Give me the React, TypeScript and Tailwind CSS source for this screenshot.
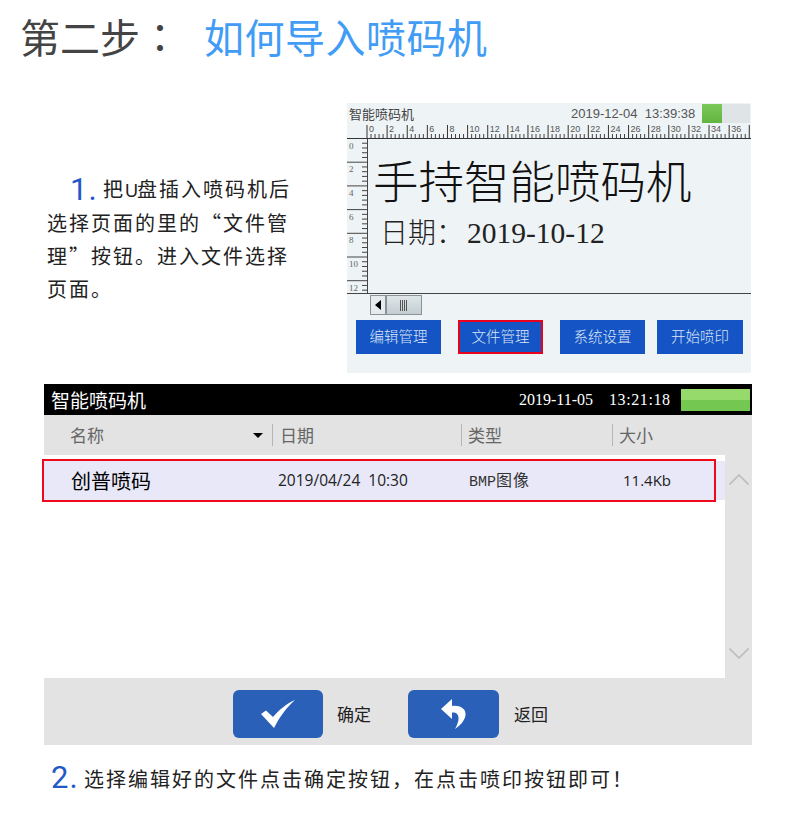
const cjk = "font-['Noto_Sans_CJK_SC','Liberation_Sans',sans-serif]";
const colon = "font-['Noto_Sans_CJK_TC',sans-serif]";
const num = "font-['Roboto',sans-serif] text-[31px] leading-none text-[#2458c8]";

const screenButtons = [
  { label: "编辑管理", cls: "w-[85px] ml-[9px]" },
  { label: "文件管理", cls: "w-[85px] ml-[17px] border-[2px] border-[#e8001c]" },
  { label: "系统设置", cls: "w-[85px] ml-[17px]" },
  { label: "开始喷印", cls: "w-[86px] ml-[12px]" },
];

function TopRuler() {
  const marks = Array.from({ length: 20 }, (_, i) => i);
  return (
    <svg width="404" height="15" className="block shrink-0">
      {marks.map((m) => {
        const x = 20 + m * 20.12;
        return (
          <g key={m}>
            <line x1={x} y1="1" x2={x} y2="14" stroke="#333" strokeWidth="1" />
            {[1, 2, 3, 4].map((k) => (
              <line key={k} x1={x + k * 4.02} y1="10" x2={x + k * 4.02} y2="14" stroke="#444" strokeWidth="1" />
            ))}
            {m < 19 && (
              <text x={x + 2} y="8" fontSize="9" fill="#555" fontFamily="Liberation Sans">
                {m * 2}
              </text>
            )}
          </g>
        );
      })}
      <line x1="0" y1="14.5" x2="404" y2="14.5" stroke="#333" strokeWidth="1.2" />
    </svg>
  );
}

function LeftRuler() {
  const marks = [0, 2, 4, 6, 8, 10, 12];
  return (
    <svg width="20" height="155" className="block shrink-0">
      {marks.map((m, i) => {
        const y = i * 23.7 - 0.5;
        return (
          <g key={m}>
            <line x1="0" y1={y} x2="20" y2={y} stroke="#444" strokeWidth="1" />
            {[1, 2, 3, 4].map((k) => (
              <line key={k} x1="15" y1={y + k * 4.74} x2="20" y2={y + k * 4.74} stroke="#444" strokeWidth="1" />
            ))}
            <text x="2" y={y + 10} fontSize="9" fill="#666" fontFamily="Liberation Serif">
              {m}
            </text>
          </g>
        );
      })}
    </svg>
  );
}

function PrinterScreen() {
  return (
    <div className={`w-[404px] h-[270px] bg-[#eef3f6] flex flex-col ${cjk}`}>
      <div className="h-[21px] flex items-center shrink-0">
        <span className="ml-[2px] w-[222px] text-[13px] leading-none text-[#444]">智能喷码机</span>
        <span className="font-['Liberation_Sans'] text-[13px] leading-none text-[#555] whitespace-pre">2019-12-04  13:39:38</span>
        <div className="ml-[7px] h-[19px] w-[48px] bg-[#dfe4e6] flex">
          <div className="w-[20px] h-full bg-gradient-to-b from-[#7cc85a] to-[#62b53f]" />
        </div>
      </div>
      <TopRuler />
      <div className="h-[155px] flex border-b border-[#444] shrink-0">
        <LeftRuler />
        <div className="flex-1 border-l border-[#444] pl-[5px]">
          <div className="mt-[10px] text-[45.500px] leading-[60px] text-[#111] font-light whitespace-nowrap">手持智能喷码机</div>
          <div className="mt-[2px] ml-[7px] text-[28px] leading-[40px] text-[#222] font-light whitespace-nowrap">
            日期：<span className="ml-[3px] font-['Liberation_Serif'] text-[29.500px]">2019-10-12</span>
          </div>
        </div>
      </div>
      <div className="mt-[1px] ml-[23px] h-[20px] flex shrink-0">
        <div className="w-[16px] border border-[#8a9296] bg-[#e6ebee] flex items-center justify-center">
          <div className="w-0 h-0 border-y-[5px] border-y-transparent border-r-[6px] border-r-black" />
        </div>
        <div className="w-[36px] border border-[#8a9296] bg-gradient-to-b from-[#dfe6e8] to-[#c3ced2] flex items-center justify-center">
          <div className="w-[8px] h-[11px] bg-[repeating-linear-gradient(90deg,#555_0,#555_1px,transparent_1px,transparent_2px)]" />
        </div>
      </div>
      <div className="mt-[5px] flex">
        {screenButtons.map((b) => (
          <div key={b.label} className={`${b.cls} h-[34px] pb-[2px] bg-[#1554c4] flex items-center justify-center text-[14.500px] text-[#dce6f5] font-light`}>
            {b.label}
          </div>
        ))}
      </div>
    </div>
  );
}

function FileBrowser() {
  return (
    <div className={`ml-[44px] w-[708px] flex flex-col ${cjk}`}>
      <div className="h-[31px] bg-black flex items-center text-white">
        <span className="ml-[7px] w-[468px] text-[19px] leading-none whitespace-nowrap">智能喷码机</span>
        <span className="w-[90px] font-['Liberation_Serif'] text-[16px] leading-none whitespace-pre">2019-11-05</span>
        <span className="w-[72px] font-['Liberation_Serif'] text-[16px] leading-none tracking-[0.600px] whitespace-pre">13:21:18</span>
        <div className="w-[69px] h-[22px] flex flex-col">
          <div className="h-[11px] bg-[#97da6c]" />
          <div className="h-[11px] bg-[#74c851]" />
        </div>
      </div>
      <div className="h-[40px] bg-[#e3e3e3] flex items-center text-[17px] text-[#666]">
        <span className="ml-[26px] w-[183px] whitespace-nowrap">名称</span>
        <div className="w-0 h-0 border-x-[5px] border-x-transparent border-t-[5px] border-t-black" />
        <div className="ml-[9px] h-[22px] border-l border-[#b5b5b5]" />
        <span className="ml-[7px] w-[181px] whitespace-nowrap">日期</span>
        <div className="h-[22px] border-l border-[#b5b5b5]" />
        <span className="ml-[6px] w-[144px] whitespace-nowrap">类型</span>
        <div className="h-[22px] border-l border-[#b5b5b5]" />
        <span className="ml-[6px] whitespace-nowrap">大小</span>
      </div>
      <div className="h-[223px] flex">
        <div className="w-[681px] bg-white pt-[6px] relative">
          <div className="h-[39px] bg-[#e8e8f8] flex items-center text-[#222]">
            <span className="ml-[27px] w-[207px] text-[20px] text-black whitespace-nowrap">创普喷码</span>
            <span className="w-[191px] font-['Open_Sans'] text-[15.500px] whitespace-pre">2019/04/24  10:30</span>
            <span className="w-[154px] text-[16px] tracking-[1px] text-[#333] whitespace-nowrap">
              <span className="font-['Liberation_Mono'] text-[15px] tracking-[0px]">BMP</span>图像
            </span>
            <span className="font-['Open_Sans'] text-[15px]">11.4Kb</span>
          </div>
          <div className="absolute left-[-2px] top-[4px] w-[674px] h-[43px] border-[2px] border-[#ee0a1c]" />
        </div>
        <div className="flex-1 bg-[#e3e3e3] flex flex-col items-center justify-between pt-[19px] pb-[19px]">
          <svg width="20" height="11" viewBox="0 0 20 11"><polyline points="0.5,10.5 10,1 19.5,10.5" fill="none" stroke="#bdbdbd" strokeWidth="1.6" /></svg>
          <svg width="20" height="11" viewBox="0 0 20 11"><polyline points="0.5,0.5 10,10 19.5,0.5" fill="none" stroke="#bdbdbd" strokeWidth="1.6" /></svg>
        </div>
      </div>
      <div className="h-[67px] pt-[5px] bg-[#e3e3e3] flex items-center text-[17px] text-[#222]">
        <div className="ml-[189px] w-[90px] h-[48px] rounded-[6px] bg-[#2a60b8] flex items-center justify-center">
          <svg width="34" height="28" viewBox="0 0 34 28">
            <path d="M0 14 L5 10.500 L12 17 C18 10 25 4 34 0 C26 7 19 16 13 28 Z" fill="#fff" />
          </svg>
        </div>
        <span className="ml-[14px] w-[71px] whitespace-nowrap">确定</span>
        <div className="w-[91px] h-[48px] rounded-[6px] bg-[#2a60b8] flex items-center justify-center">
          <svg width="26" height="30" viewBox="0 0 26 30">
            <path d="M11 0 L0 10 L11 20 L11 13.500 C18 13 20 19 14 30 C23 24 27 16 23 10.500 C20 7 15 6.500 11 7 Z" fill="#fff" />
          </svg>
        </div>
        <span className="ml-[15px] whitespace-nowrap">返回</span>
      </div>
    </div>
  );
}

export default function App() {
  return (
    <div className={`w-[790px] h-[819px] bg-white overflow-hidden ${cjk}`}>
      <div className="h-[72px] pl-[20px] flex items-center text-[40px] leading-none whitespace-pre">
        <span className="text-[#444]">第二步<span className={colon}>：</span></span>
        <span className="ml-[24px] tracking-[0.500px] text-[#409cf5]">如何导入喷码机</span>
      </div>
      <div className="mt-[31px] h-[270px] flex">
        <div className="ml-[47px] w-[300px] pt-[70px] text-[20px] leading-[33px] tracking-[2px] text-[#222] whitespace-nowrap">
          <div className="flex items-center h-[33px]">
            <span className={`ml-[23px] w-[33px] tracking-[1px] ${num}`}>1.</span>
            <span>把<span className="font-['Liberation_Sans'] text-[18px] tracking-[-1px]">U</span>盘插入喷码机后</span>
          </div>
          <div>选择页面的里的“文件管</div>
          <div>理”按钮。进入文件选择</div>
          <div>页面。</div>
        </div>
        <PrinterScreen />
      </div>
      <div className="mt-[11px]">
        <FileBrowser />
      </div>
      <div className="mt-[14px] ml-[51px] flex items-center h-[36px] whitespace-nowrap">
        <span className={`w-[33px] tracking-[1px] ${num}`}>2.</span>
        <span className="pt-[4px] text-[20px] tracking-[2px] text-[#222]">选择编辑好的文件点击确定按钮，在点击喷印按钮即可！</span>
      </div>
    </div>
  );
}
